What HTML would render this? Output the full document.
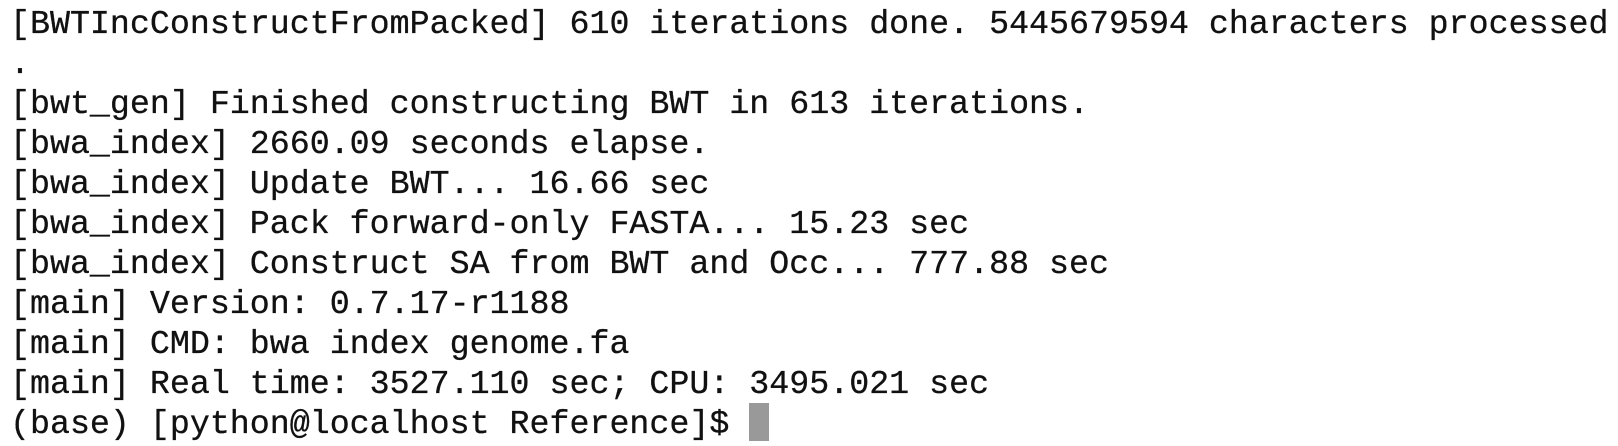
<!DOCTYPE html>
<html><head><meta charset="utf-8"><style>
html,body{margin:0;padding:0;background:#fff;width:1618px;height:446px;overflow:hidden;position:relative}
.l{position:absolute;left:10px;white-space:pre;font-family:"Liberation Mono",monospace;font-size:33.3px;line-height:38px;height:38px;color:#111;-webkit-text-stroke:0.3px #111}
.c{position:absolute;left:749px;top:403px;width:20px;height:38px;background:#999}
</style></head><body>
<div class="l" style="top:5px">[BWTIncConstructFromPacked] 610 iterations done. 5445679594 characters processed</div>
<div class="l" style="top:45px">.</div>
<div class="l" style="top:85px">[bwt_gen] Finished constructing BWT in 613 iterations.</div>
<div class="l" style="top:125px">[bwa_index] 2660.09 seconds elapse.</div>
<div class="l" style="top:165px">[bwa_index] Update BWT... 16.66 sec</div>
<div class="l" style="top:205px">[bwa_index] Pack forward-only FASTA... 15.23 sec</div>
<div class="l" style="top:245px">[bwa_index] Construct SA from BWT and Occ... 777.88 sec</div>
<div class="l" style="top:285px">[main] Version: 0.7.17-r1188</div>
<div class="l" style="top:325px">[main] CMD: bwa index genome.fa</div>
<div class="l" style="top:365px">[main] Real time: 3527.110 sec; CPU: 3495.021 sec</div>
<div class="l" style="top:405px">(base) [python@localhost Reference]$ </div>
<div class="c"></div>
</body></html>
